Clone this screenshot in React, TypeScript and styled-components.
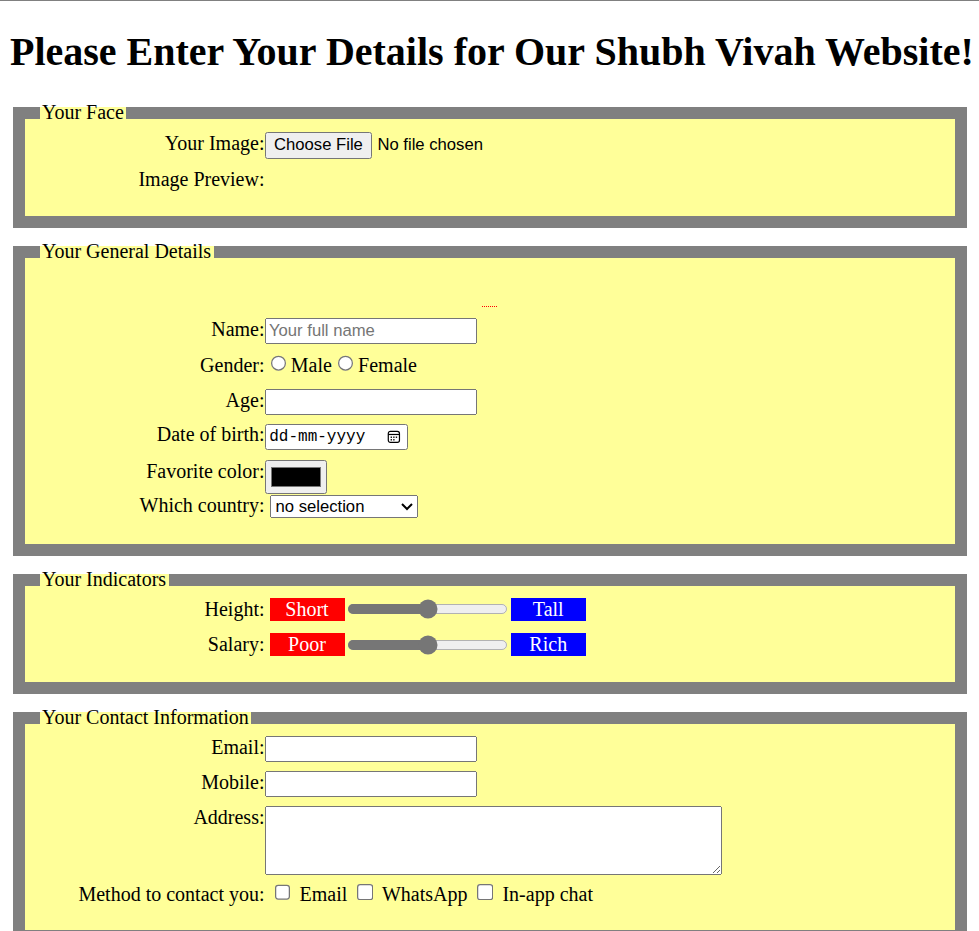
import React from "react";
import styled, { createGlobalStyle } from "styled-components";

const Global = createGlobalStyle`
  html {
    scrollbar-width: none;
  }
  html, body {
    margin: 0;
    padding: 0;
    background: #ffffff;
  }
  body {
    border-top: 1px solid #808080;
    font-family: "Liberation Serif", "Times New Roman", serif;
    font-size: 16px;
    line-height: 1.15;
    color: #000000;
  }
`;

const Page = styled.main`
  zoom: 1.25;
  display: flow-root;
  padding: 0 8px 8px;
`;

const Title = styled.h1`
  font-size: 32px;
  font-weight: bold;
  line-height: 1.15;
  margin: 22px 0 21.44px;
  white-space: nowrap;
`;

const Fieldset = styled.fieldset<{ $pt?: number }>`
  margin: 0 2px 9.8px;
  padding: ${(p) => p.$pt ?? 1.4}px 12px 10px;
  border: 10px solid #808080;
  background: #ffff99;
  min-inline-size: min-content;
`;

const Legend = styled.legend`
  padding: 0 2px;
`;

const Rows = styled.div<{ $pt?: number; $pb?: number }>`
  display: flex;
  flex-direction: column;
  padding-top: ${(p) => p.$pt ?? 0}px;
  padding-bottom: ${(p) => p.$pb ?? 0}px;
`;

const Row = styled.div<{ $align?: string; $h?: number; $pt?: number }>`
  display: flex;
  align-items: ${(p) => p.$align ?? "baseline"};
  height: ${(p) => p.$h ?? 28.4}px;
  padding-top: ${(p) => p.$pt ?? 3.6}px;
  box-sizing: border-box;
`;

const Label = styled.label`
  width: 25%;
  flex-shrink: 0;
  text-align: right;
`;

const controlFont = `13.333px "Liberation Sans", Arial, sans-serif`;

const TextInput = styled.input`
  width: 170px;
  height: 21px;
  box-sizing: border-box;
  margin: 0;
  font: ${controlFont};
`;

const FileInput = styled.input`
  margin: 0;
  font: ${controlFont};
`;

const ColorInput = styled.input`
  margin: 0;
`;

const Select = styled.select`
  width: 119px;
  margin: 0 0 0 4px;
  font: ${controlFont};
`;

const TextArea = styled.textarea`
  width: 366px;
  height: 55.5px;
  box-sizing: border-box;
  margin: 0;
  font: 13.333px "Liberation Mono", monospace;
`;

const Choices = styled.span<{ $space?: boolean }>`
  margin-left: ${(p) => (p.$space ? 4 : 0)}px;
  white-space: nowrap;
`;

const DateBox = styled.span`
  display: inline-flex;
  align-items: center;
  justify-content: space-between;
  width: 115px;
  height: 21px;
  box-sizing: border-box;
  padding: 0 5px 0 3px;
  border: 1px solid #767676;
  border-radius: 2px;
  background: #ffffff;
  font: 12.8px "Liberation Mono", "DejaVu Sans Mono", monospace;
  color: #000000;
`;

const Tag = styled.span<{ $tone: "red" | "blue"; $space?: boolean }>`
  display: inline-block;
  width: 60px;
  margin-left: ${(p) => (p.$space ? 4 : 0)}px;
  text-align: center;
  color: #ffffff;
  background: ${(p) => (p.$tone === "red" ? "#ff0000" : "#0000ff")};
`;

const Range = styled.input`
  width: 129px;
  margin: 2px;
  accent-color: #767676;
`;

const PreviewSlot = styled.div`
  display: flex;
  justify-content: center;
  height: 38.8px;
  padding-top: 33px;
  box-sizing: border-box;
`;

const DottedMark = styled.span`
  width: 12px;
  height: 0;
  border-top: 1px dotted #ff0000;
`;

const CalendarIcon = () => (
  <svg width="11" height="11" viewBox="0 0 16 16" aria-hidden="true">
    <rect x="1.5" y="1.5" width="13" height="13" rx="2.5" fill="none" stroke="#000" strokeWidth="1.4" />
    <path d="M1.5 5.2h13" stroke="#000" strokeWidth="1.4" />
    <rect x="4.2" y="7.6" width="1.6" height="1.6" fill="#000" />
    <rect x="7.2" y="7.6" width="1.6" height="1.6" fill="#000" />
    <rect x="10.2" y="7.6" width="1.6" height="1.6" fill="#000" />
    <rect x="4.2" y="10.6" width="1.6" height="1.6" fill="#000" />
    <rect x="7.2" y="10.6" width="1.6" height="1.6" fill="#000" />
  </svg>
);

export default function App() {
  return (
    <>
      <Global />
      <Page>
        <Title>Please Enter Your Details for Our Shubh Vivah Website!</Title>

        <Fieldset>
          <Legend>Your Face</Legend>
          <Rows $pt={1.2} $pb={4}>
            <Row>
              <Label htmlFor="photo">Your Image:</Label>
              <FileInput id="photo" type="file" accept="image/*" />
            </Row>
            <Row>
              <Label>Image Preview:</Label>
            </Row>
          </Rows>
        </Fieldset>

        <Fieldset>
          <Legend>Your General Details</Legend>
          <PreviewSlot>
            <DottedMark />
          </PreviewSlot>
          <Rows $pb={4}>
            <Row>
              <Label htmlFor="name">Name:</Label>
              <TextInput id="name" type="text" placeholder="Your full name" />
            </Row>
            <Row $pt={2}>
              <Label>Gender:</Label>
              <Choices>
                <input type="radio" name="gender" value="male" />Male<input type="radio" name="gender" value="female" />Female
              </Choices>
            </Row>
            <Row>
              <Label htmlFor="age">Age:</Label>
              <TextInput id="age" type="text" />
            </Row>
            <Row $pt={2.4}>
              <Label>Date of birth:</Label>
              <DateBox>
                <span>dd-mm-yyyy</span>
                <CalendarIcon />
              </DateBox>
            </Row>
            <Row $align="flex-start">
              <Label htmlFor="color">Favorite color:</Label>
              <ColorInput id="color" type="color" defaultValue="#000000" />
            </Row>
            <Row $pt={2}>
              <Label htmlFor="country">Which country:</Label>
              <Select id="country" defaultValue="">
                <option value="">no selection</option>
                <option value="in">India</option>
                <option value="np">Nepal</option>
              </Select>
            </Row>
          </Rows>
        </Fieldset>

        <Fieldset $pt={0.2}>
          <Legend>Your Indicators</Legend>
          <Rows $pb={5.6}>
            <Row $align="center" $pt={0}>
              <Label>Height:</Label>
              <Tag $tone="red" $space>Short</Tag>
              <Range type="range" min={0} max={100} defaultValue={50} />
              <Tag $tone="blue">Tall</Tag>
            </Row>
            <Row $align="center" $pt={0}>
              <Label>Salary:</Label>
              <Tag $tone="red" $space>Poor</Tag>
              <Range type="range" min={0} max={100} defaultValue={50} />
              <Tag $tone="blue">Rich</Tag>
            </Row>
          </Rows>
        </Fieldset>

        <Fieldset>
          <Legend>Your Contact Information</Legend>
          <Rows $pt={0.4} $pb={4.8}>
            <Row>
              <Label htmlFor="email">Email:</Label>
              <TextInput id="email" type="email" />
            </Row>
            <Row $pt={2.8}>
              <Label htmlFor="mobile">Mobile:</Label>
              <TextInput id="mobile" type="tel" />
            </Row>
            <Row $align="flex-start" $h={58.8} $pt={2.8}>
              <Label htmlFor="address">Address:</Label>
              <TextArea id="address" />
            </Row>
            <Row>
              <Label>Method to contact you:</Label>
              <Choices $space>
                <input type="checkbox" /> Email <input type="checkbox" /> WhatsApp <input type="checkbox" /> In-app chat
              </Choices>
            </Row>
          </Rows>
        </Fieldset>
      </Page>
    </>
  );
}
